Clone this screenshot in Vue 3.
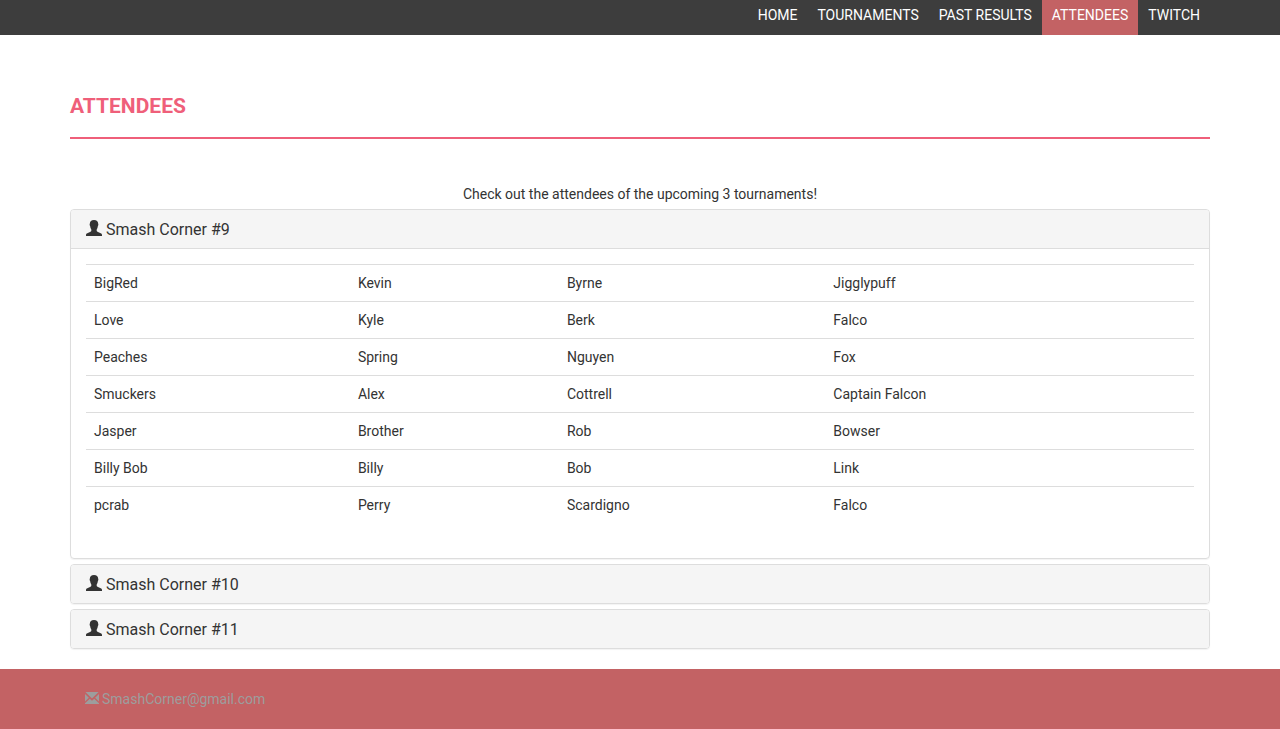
<script setup>
import { ref } from 'vue'

const links = ['Home', 'Tournaments', 'Past Results', 'Attendees', 'Twitch']
const active = 'Attendees'
const open = ref(9)

const tournaments = [
  {
    id: 9,
    players: [
      ['BigRed', 'Kevin', 'Byrne', 'Jigglypuff'],
      ['Love', 'Kyle', 'Berk', 'Falco'],
      ['Peaches', 'Spring', 'Nguyen', 'Fox'],
      ['Smuckers', 'Alex', 'Cottrell', 'Captain Falcon'],
      ['Jasper', 'Brother', 'Rob', 'Bowser'],
      ['Billy Bob', 'Billy', 'Bob', 'Link'],
      ['pcrab', 'Perry', 'Scardigno', 'Falco'],
    ],
  },
  { id: 10, players: [] },
  { id: 11, players: [] },
]

function toggle(id) {
  open.value = open.value === id ? null : id
}
</script>

<template>
  <div class="page">
    <header class="topbar">
      <nav class="container nav">
        <a v-for="link in links" :key="link" href="#" :class="{ active: link === active }">{{ link }}</a>
      </nav>
    </header>

    <main class="container">
      <h1>Attendees</h1>
      <p class="intro">Check out the attendees of the upcoming 3 tournaments!</p>
      <div class="panels">
        <section v-for="t in tournaments" :key="t.id" class="panel">
          <h2>
            <button type="button" :aria-expanded="open === t.id" @click="toggle(t.id)">
              <svg class="user" viewBox="0 0 16 16" aria-hidden="true">
                <path d="M8 0C5.4 0 3.8 1.4 3.8 3.8C3.5 4.2 3.6 5.4 4.1 6C4.3 7.6 4.7 8.8 5.3 9.6V11C5.1 11.5 4.7 11.8 4 12L1.3 13.2C0.4 13.6 0 14.2 0 15V16H16V15C16 14.2 15.6 13.6 14.7 13.2L12 12C11.3 11.8 10.9 11.5 10.7 11V9.6C11.3 8.8 11.7 7.6 11.9 6C12.4 5.4 12.5 4.2 12.2 3.8C12.2 1.4 10.6 0 8 0Z" />
              </svg>
              <span>Smash Corner #{{ t.id }}</span>
            </button>
          </h2>
          <div v-if="open === t.id" class="body">
            <table>
              <tbody>
                <tr v-for="p in t.players" :key="p[0]">
                  <td v-for="(cell, i) in p" :key="i">{{ cell }}</td>
                </tr>
              </tbody>
            </table>
          </div>
        </section>
      </div>
    </main>

    <footer>
      <div class="container contact">
        <a href="mailto:SmashCorner@gmail.com">
          <svg class="mail" viewBox="0 0 14 14" aria-hidden="true">
            <path d="M0.4 0H13.6L7 6.4ZM0 2L3.9 5.8L0 9.6ZM14 2V9.6L10.1 5.8ZM4.8 6.7L7 8.7L9.2 6.7L14 11.2V12H0V11.2Z" />
          </svg>
          <span>SmashCorner@gmail.com</span>
        </a>
      </div>
    </footer>
  </div>
</template>

<style>
body {
  margin: 0;
  background: #fff;
}
</style>

<style scoped>
.page {
  display: flex;
  flex-direction: column;
  min-height: 100vh;
  font: 14px/20px Roboto, sans-serif;
  color: #333;
}

.page *,
.page {
  box-sizing: border-box;
}

.container {
  width: 100%;
  max-width: 1140px;
  margin: 0 auto;
}

.topbar {
  background: #3d3d3d;
}

.nav {
  display: flex;
  justify-content: flex-end;
}

.nav a {
  padding: 5px 10px 10px;
  color: #fff;
  text-decoration: none;
  text-transform: uppercase;
}

.nav a.active {
  background: #c36264;
}

main {
  flex: 1;
}

h1 {
  margin: 60px 0 45px;
  padding-bottom: 20px;
  border-bottom: 2px solid #ef5f7a;
  color: #ef5f7a;
  font-size: 21px;
  line-height: 22px;
  font-weight: 700;
  text-transform: uppercase;
}

.intro {
  margin: 0 0 5px;
  text-align: center;
}

.panels {
  display: flex;
  flex-direction: column;
  gap: 5px;
  margin-bottom: 19px;
}

.panel {
  border: 1px solid #ddd;
  border-radius: 4px;
  box-shadow: 0 1px 1px rgba(0, 0, 0, 0.05);
  overflow: hidden;
}

h2 {
  margin: 0;
}

h2 button {
  display: flex;
  align-items: flex-start;
  gap: 4px;
  width: 100%;
  padding: 10px 15px 8px;
  border: 0;
  background: #f5f5f5;
  color: #333;
  font: 16px/20px Roboto, sans-serif;
  text-align: left;
  cursor: pointer;
}

.user {
  width: 16px;
  height: 16px;
  fill: #333;
}

.body {
  padding: 15px 15px 35px;
  border-top: 1px solid #ddd;
}

table {
  width: 100%;
  border-collapse: collapse;
}

td {
  padding: 8px;
  border-top: 1px solid #ddd;
}

footer {
  background: #c36264;
}

.contact {
  padding: 20px 15px;
}

.contact a {
  display: flex;
  width: fit-content;
  align-items: center;
  gap: 3px;
  color: #9d9d9d;
  text-decoration: none;
}

.mail {
  width: 14px;
  height: 14px;
  fill: #9d9d9d;
}
</style>
